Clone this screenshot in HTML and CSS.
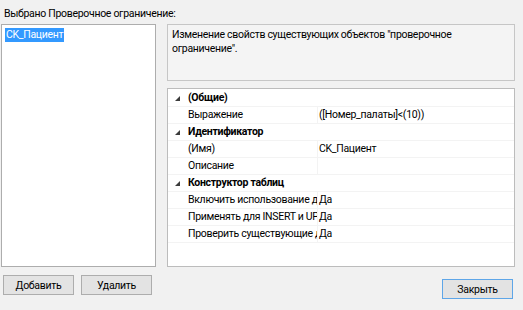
FILE: index.html
```html
<!DOCTYPE html>
<html lang="ru">
  <head>
    <meta charset="UTF-8" />
    <title>Проверочные ограничения</title>
    <link rel="stylesheet" href="styles.css">
  </head>
  <body>
    <div class="dialog">
      <div class="caption">Выбрано Проверочное ограничение:</div>

      <div class="main">
        <ul class="list">
          <li class="item selected">CK_Пациент</li>
        </ul>

        <div class="side">
          <div class="desc">Изменение свойств существующих объектов "проверочное ограничение".</div>

          <div class="grid">
            <div class="row cat"><span class="exp"></span><span class="name">(Общие)</span></div>
            <div class="row"><span class="exp"></span><span class="name">Выражение</span><span class="value">([Номер_палаты]&lt;(10))</span></div>
            <div class="row cat"><span class="exp"></span><span class="name">Идентификатор</span></div>
            <div class="row"><span class="exp"></span><span class="name">(Имя)</span><span class="value">CK_Пациент</span></div>
            <div class="row"><span class="exp"></span><span class="name">Описание</span><span class="value"></span></div>
            <div class="row cat"><span class="exp"></span><span class="name">Конструктор таблиц</span></div>
            <div class="row"><span class="exp"></span><span class="name">Включить использование для репликации</span><span class="value">Да</span></div>
            <div class="row"><span class="exp"></span><span class="name">Применять для INSERT и UPDATE</span><span class="value">Да</span></div>
            <div class="row"><span class="exp"></span><span class="name">Проверить существующие данные</span><span class="value">Да</span></div>
          </div>
        </div>
      </div>

      <div class="buttons">
        <button class="btn">Добавить</button>
        <button class="btn">Удалить</button>
        <button class="btn default">Закрыть</button>
      </div>
    </div>
  </body>
</html>
```

FILE: styles.css
```css
/* Resets */
body {
  margin: 0;
  background: #f1f1f1;
  font-family: Roboto, "Liberation Sans", sans-serif;
  font-size: 10.5px;
  letter-spacing: -0.3px;
  color: #000;
}
ul {
  margin: 0;
  padding-left: 0;
  list-style: none;
}

/* Dialog */
.dialog {
  padding: 0 8px 0 1px;
}
.caption {
  padding: 6px 0 2px 3px;
  line-height: 16px;
}
.main {
  display: flex;
  gap: 11px;
  height: 243px;
}

/* List */
.list {
  width: 147px;
  padding: 3px;
  background: #fff;
  border: 1px solid #adadad;
}
.item {
  display: inline-block;
  padding: 0 1px;
  line-height: 14px;
}
.item.selected {
  background: #3399ff;
  color: #fff;
}

/* Right side */
.side {
  flex: 1;
  display: flex;
  flex-direction: column;
  gap: 7px;
}
.desc {
  height: 47px;
  padding: 3px 50px 5px 4px;
  line-height: 14px;
  background: #f4f4f4;
  border: 1px solid #c6c6c6;
}
.grid {
  flex: 1;
  background: #fff;
  border: 1px solid #bcbcbc;
  padding-top: 1px;
}
.row {
  display: flex;
  height: 16px;
  line-height: 15px;
  border-bottom: 1px solid #f3f3f3;
  white-space: nowrap;
}
.exp {
  width: 20px;
  flex: none;
}
.cat .exp {
  position: relative;
}
.cat .exp::after {
  content: "";
  position: absolute;
  left: 7px;
  top: 6px;
  border-style: solid;
  border-width: 0 0 5px 5px;
  border-color: transparent transparent #3c3c3c transparent;
}
.name {
  width: 129px;
  flex: none;
  overflow: hidden;
}
.cat .name {
  font-weight: bold;
}
.value {
  flex: 1;
  padding-left: 1px;
  border-left: 1px solid #f3f3f3;
}

/* Buttons */
.buttons {
  display: flex;
  gap: 7px;
  padding: 8px 2px 0 2px;
}
.btn {
  width: 71px;
  height: 20px;
  padding: 0;
  font: inherit;
  letter-spacing: inherit;
  background: #e3e3e3;
  border: 1px solid #adadad;
}
.btn.default {
  margin: 4px 0 0 auto;
  border-color: #5ea6e8;
}
```
